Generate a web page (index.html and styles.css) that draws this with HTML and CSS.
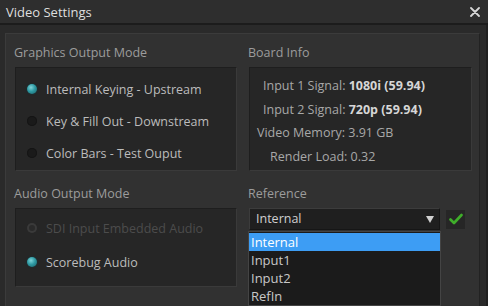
FILE: index.html
```html
<!DOCTYPE html>
<html>
<head>
  <meta charset="UTF-8" />
  <title>Video Settings</title>
  <link rel="stylesheet" href="styles.css">
</head>
<body>

<div class="window">
  <div class="titlebar">
    <span class="title">Video Settings</span>
    <svg class="close" width="10" height="10" viewBox="0 0 10 10">
      <path d="M1 1 L9 9 M9 1 L1 9" stroke="#d6d6d6" stroke-width="1.8" stroke-linecap="round"/>
    </svg>
  </div>

  <div class="content">
    <div class="panel">
      <!-- Graphics output -->
      <div class="group">
        <div class="group-label">Graphics Output Mode</div>
        <div class="box box-graphics">
          <div class="radio-row"><span class="dot on"></span>Internal Keying - Upstream</div>
          <div class="radio-row"><span class="dot"></span>Key &amp; Fill Out - Downstream</div>
          <div class="radio-row"><span class="dot"></span>Color Bars - Test Ouput</div>
        </div>
      </div>

      <!-- Board info -->
      <div class="group">
        <div class="group-label">Board Info</div>
        <div class="box box-info">
          <div class="info-row in1">Input 1 Signal: <b>1080i (59.94)</b></div>
          <div class="info-row in2">Input 2 Signal: <b>720p (59.94)</b></div>
          <div class="info-row mem">Video Memory: 3.91 GB</div>
          <div class="info-row load">Render Load: 0.32</div>
        </div>
      </div>

      <!-- Audio output -->
      <div class="group">
        <div class="group-label lower">Audio Output Mode</div>
        <div class="box box-audio">
          <div class="radio-row disabled"><span class="dot ring"></span>SDI Input Embedded Audio</div>
          <div class="radio-row"><span class="dot on"></span>Scorebug Audio</div>
        </div>
      </div>

      <!-- Reference -->
      <div class="group">
        <div class="group-label lower">Reference</div>
        <div class="ref-line">
          <div class="select">
            <span>Internal</span>
            <span class="arrow"></span>
            <ul class="dropdown">
              <li class="selected">Internal</li>
              <li>Input1</li>
              <li>Input2</li>
              <li>RefIn</li>
            </ul>
          </div>
          <div class="apply">
            <svg width="14" height="12" viewBox="0 0 14 12">
              <path d="M1.5 6.5 L5 10 L12.5 2" fill="none" stroke="#3fae2a" stroke-width="2.6" stroke-linecap="round" stroke-linejoin="round"/>
            </svg>
          </div>
        </div>
      </div>
    </div>
  </div>
</div>

</body>
</html>
```

FILE: styles.css
```css
html, body {
  margin: 0;
  padding: 0;
  background: #2a2a2a;
}

body {
  font-family: "Open Sans", "Noto Sans", sans-serif;
  font-size: 12.5px;
}

.window {
  width: 488px;
  height: 306px;
  overflow: hidden;
  background: #2a2a2a;
}

.titlebar {
  height: 23px;
  background: #2e2e2e;
  border-bottom: 2px solid #1c1c1c;
  display: flex;
  align-items: center;
  justify-content: space-between;
  padding: 0 8px 0 6px;
}

.title {
  color: #dedede;
  font-size: 13px;
}

.close {
  display: block;
  margin-top: 1px;
}

.content {
  padding: 8px 6px 0 5px;
  border-right: 2px solid #202020;
  width: 475px;
}

.panel {
  height: 266px;
  background: #313131;
  border: 1px solid #3b3b3b;
  border-right-color: #222;
  padding: 10px 8px 0 8px;
  display: grid;
  grid-template-columns: 223px 224px;
  column-gap: 11px;
  align-content: start;
}

.group-label {
  color: #9c9c9c;
  height: 17px;
  line-height: 17px;
  margin-bottom: 6px;
}

.group-label.lower {
  margin-top: 14px;
}

.box {
  background: #262626;
  border: 1px solid #1e1e1e;
  border-right-color: #3a3a3a;
  border-bottom-color: #3a3a3a;
  margin-left: 1px;
}

.box-graphics {
  height: 96px;
  padding: 5px 0 1px 0;
}

.box-info {
  height: 96px;
  padding: 6px 0 0 0;
}

.box-audio {
  height: 72px;
  padding: 2px 0 3px 0;
}

.radio-row {
  height: 32px;
  display: flex;
  align-items: center;
  padding-left: 11px;
  color: #bcbcbc;
}

.box-audio .radio-row {
  height: 34px;
}

.radio-row.disabled {
  color: #4c4c4c;
}

.dot {
  width: 10px;
  height: 10px;
  border-radius: 50%;
  background: #1a1a1a;
  margin-right: 9px;
  box-shadow: inset 0 0 0 1px #151515;
}

.dot.on {
  background: radial-gradient(circle at 40% 35%, #7fd3d8 0%, #2e9aa3 45%, #1b5e66 100%);
  box-shadow: 0 0 2px #0c3a40;
}

.dot.ring {
  background: #2a2a2a;
  box-shadow: inset 0 0 0 2px #3a3a3a;
}

.info-row {
  height: 23.5px;
  line-height: 23.5px;
  color: #a8a8a8;
  white-space: nowrap;
}

.info-row b {
  color: #d6d6d6;
}

.in1, .in2 { padding-left: 13px; }
.mem { padding-left: 7px; }
.load { padding-left: 20px; }

.ref-line {
  display: flex;
  align-items: center;
  gap: 6px;
  margin-left: 1px;
}

.select {
  position: relative;
  width: 183px;
  height: 20px;
  background: #1f1f1f;
  border: 1px solid #3c3c3c;
  border-bottom-color: #161616;
  border-right-color: #161616;
  color: #cfcfcf;
  padding-left: 6px;
  line-height: 20px;
}

.arrow {
  position: absolute;
  right: 5px;
  top: 7px;
  width: 0;
  height: 0;
  border-left: 4px solid transparent;
  border-right: 4px solid transparent;
  border-top: 7px solid #d0d0d0;
}

.dropdown {
  position: absolute;
  left: -2px;
  top: 22px;
  width: 191px;
  margin: 0;
  padding: 1px 0 0 0;
  list-style: none;
  background: #1b1b1b;
  border: 1px solid #444;
}

.dropdown li {
  height: 18px;
  line-height: 18px;
  padding-left: 2px;
  color: #c8c8c8;
  font-size: 13px;
}

.dropdown li.selected {
  background: #3d9df4;
  color: #fff;
}

.apply {
  width: 19px;
  height: 19px;
  background: #262626;
  display: flex;
  align-items: center;
  justify-content: center;
}
```
